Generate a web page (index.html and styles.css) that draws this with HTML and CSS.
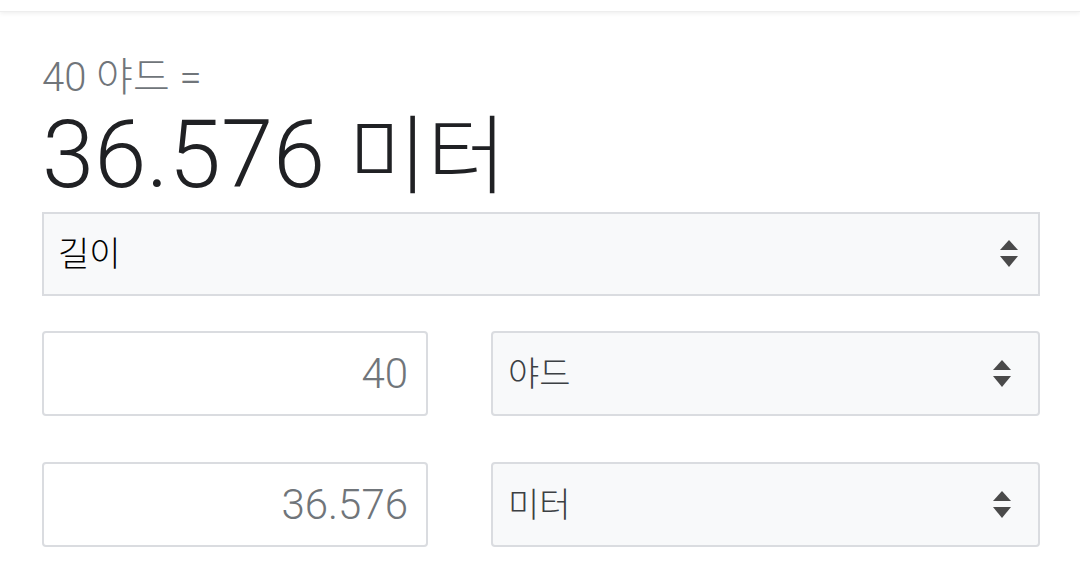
FILE: index.html
```html
<!DOCTYPE html>
<html lang="ko">
<head>
    <meta charset="UTF-8" />
    <meta name="viewport" content="width=device-width, initial-scale=1.0" />
    <title>단위 변환</title>
    <link rel="stylesheet" href="styles.css">
</head>
<body>

<div class="top-bar"></div>

<div class="converter">
    <div class="result-from">40 야드 =</div>
    <div class="result-to">36.576 <span class="result-unit">미터</span></div>

    <div class="select-wrap select-wrap--wide">
        <select class="unit-select unit-select--type">
            <option>길이</option>
        </select>
        <svg class="arrows" width="20" height="28" viewBox="0 0 20 28" aria-hidden="true">
            <path d="M1 10 L10 0 L19 10 Z" />
            <path d="M1 16 L10 27 L19 16 Z" />
        </svg>
    </div>

    <div class="unit-row">
        <input class="value-input" type="text" value="40" />
        <div class="select-wrap">
            <select class="unit-select">
                <option>야드</option>
            </select>
            <svg class="arrows" width="20" height="28" viewBox="0 0 20 28" aria-hidden="true">
                <path d="M1 10 L10 0 L19 10 Z" />
                <path d="M1 16 L10 27 L19 16 Z" />
            </svg>
        </div>
    </div>

    <div class="unit-row">
        <input class="value-input" type="text" value="36.576" />
        <div class="select-wrap">
            <select class="unit-select">
                <option>미터</option>
            </select>
            <svg class="arrows" width="20" height="28" viewBox="0 0 20 28" aria-hidden="true">
                <path d="M1 10 L10 0 L19 10 Z" />
                <path d="M1 16 L10 27 L19 16 Z" />
            </svg>
        </div>
    </div>
</div>

</body>
</html>
```

FILE: styles.css
```css
:root {
    --text-main: #202124;
    --text-muted: #70757a;
    --field-border: #dadce0;
    --field-bg: #f8f9fa;
}

body {
    margin: 0;
    background: #fff;
    font-family: Roboto, "Noto Sans CJK KR", sans-serif;
    color: var(--text-main);
}

.top-bar {
    height: 11px;
    background: #fff;
    box-shadow: 0 1px 5px rgba(0, 0, 0, 0.08);
    border-bottom: 1px solid #eee;
}

.converter {
    padding: 44px 40px 0 42px;
    display: flex;
    flex-direction: column;
}

.result-from {
    font-size: 40px;
    line-height: 44px;
    font-weight: 300;
    color: var(--text-muted);
}

.result-to {
    font-size: 94px;
    line-height: 110px;
    font-weight: 300;
    margin-bottom: 2px;
}

.result-unit {
    font-size: 86px;
    line-height: 1;
}

.select-wrap {
    position: relative;
    flex: 1;
}

.unit-select {
    appearance: none;
    -webkit-appearance: none;
    width: 100%;
    height: 85px;
    margin: 0;
    padding: 0 60px 0 15px;
    border: 2px solid var(--field-border);
    border-radius: 4px;
    background: var(--field-bg);
    font-family: inherit;
    font-size: 34px;
    font-weight: 300;
    color: #3c4043;
}

.unit-select--type {
    height: 84px;
    border-radius: 0;
    padding-left: 14px;
    color: #000;
}

.arrows {
    position: absolute;
    right: 28px;
    top: 50%;
    transform: translateY(-50%);
    fill: #4a4a4a;
}

.select-wrap--wide .arrows {
    right: 21px;
}

.unit-row {
    display: flex;
    gap: 63px;
    margin-top: 35px;
}

.unit-row + .unit-row {
    margin-top: 46px;
}

.value-input {
    width: 386px;
    height: 85px;
    box-sizing: border-box;
    margin: 0;
    padding: 0 18px;
    border: 2px solid var(--field-border);
    border-radius: 4px;
    background: #fff;
    text-align: right;
    font-family: inherit;
    font-size: 42px;
    font-weight: 300;
    color: var(--text-muted);
}
```
